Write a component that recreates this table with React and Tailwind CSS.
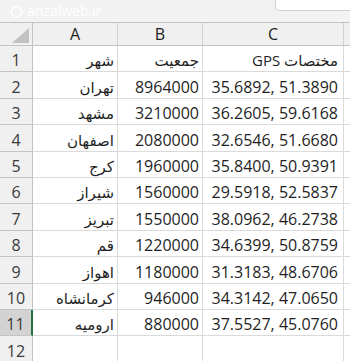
import React from "react";

const rows = [
  ["شهر", "جمعیت", "مختصات GPS"],
  ["تهران", "8964000", "35.6892, 51.3890"],
  ["مشهد", "3210000", "36.2605, 59.6168"],
  ["اصفهان", "2080000", "32.6546, 51.6680"],
  ["کرج", "1960000", "35.8400, 50.9391"],
  ["شیراز", "1560000", "29.5918, 52.5837"],
  ["تبریز", "1550000", "38.0962, 46.2738"],
  ["قم", "1220000", "34.6399, 50.8759"],
  ["اهواز", "1180000", "31.3183, 48.6706"],
  ["کرمانشاه", "946000", "34.3142, 47.0650"],
  ["ارومیه", "880000", "37.5527, 45.0760"],
  ["", "", ""],
];

const font = { fontFamily: '"Open Sans", "DejaVu Sans", sans-serif' };

// Persian text is wrapped so the bidi order stays right-to-left
function Cell({ text, w, pr, head }) {
  const fa = /[\u0600-\u06FF]/.test(text);
  return (
    <div
      className={`${w} shrink-0 border-r border-b border-[#dadada] flex items-end justify-end ${pr} leading-[17px] pb-[2px] overflow-hidden whitespace-nowrap`}
    >
      {fa ? (
        <span dir="rtl" className={head ? "text-[15px]" : "text-[15px]"}>
          {text}
        </span>
      ) : (
        text
      )}
    </div>
  );
}

function App() {
  return (
    <div
      className="w-[350px] h-[361px] overflow-hidden bg-white text-[16px] text-[#1f1f1f]"
      style={font}
    >
      {/* top strip with watermark */}
      <div className="h-[22px] bg-[#f2f2f2] flex items-start">
        <div className="flex items-center gap-1 pl-[10px] pt-[3px] text-white text-[14px] leading-[16px]">
          <svg width="13" height="13" viewBox="0 0 14 14">
            <circle cx="7" cy="7" r="5.5" fill="none" stroke="#ffffff" strokeWidth="1.5" />
          </svg>
          <span>anzalweb.ir</span>
        </div>
        <div className="ml-auto w-[75px] h-[11px] bg-white border-l border-b border-[#cfcfcf] rounded-bl-[5px]" />
      </div>

      {/* column headers */}
      <div className="flex h-[24px] bg-[#f0f0f0] border-t border-b border-[#c4c4c4] text-[#222]">
        <div className="w-[33px] shrink-0 border-r border-[#c4c4c4] flex items-end justify-end pr-[3px] pb-[2px]">
          <svg width="17" height="15" viewBox="0 0 17 15">
            <polygon points="17,0 17,15 0,15" fill="#c2c2c2" />
          </svg>
        </div>
        <div className="w-[85px] shrink-0 border-r border-[#d0d0d0] flex items-center justify-center leading-[17px]">A</div>
        <div className="w-[85px] shrink-0 border-r border-[#d0d0d0] flex items-center justify-center leading-[17px]">B</div>
        <div className="w-[141px] shrink-0 border-r border-[#d0d0d0] flex items-center justify-center leading-[17px]">C</div>
        <div className="flex-1" />
      </div>

      {/* data rows */}
      {rows.map((r, i) => {
        const active = i === 10;
        return (
          <div key={i} className="flex h-[26.4px]">
            <div
              className={
                active
                  ? "w-[33px] shrink-0 bg-[#d3d3d3] border-b border-[#c4c4c4] border-r-2 border-r-[#217346] flex items-end justify-center leading-[17px] pb-[2px] text-[#3a3a3a]"
                  : "w-[33px] shrink-0 bg-[#f0f0f0] border-b border-r border-[#c4c4c4] flex items-end justify-center leading-[17px] pb-[2px] text-[#3a3a3a]"
              }
            >
              {i + 1}
            </div>
            <Cell text={r[0]} w="w-[85px]" pr="pr-[3px]" head={i === 0} />
            <Cell text={r[1]} w="w-[85px]" pr="pr-[3px]" head={i === 0} />
            <Cell text={r[2]} w="w-[141px]" pr="pr-[5px]" head={i === 0} />
            <div className="flex-1 border-b border-[#dadada]" />
          </div>
        );
      })}
    </div>
  );
}

export default App;
